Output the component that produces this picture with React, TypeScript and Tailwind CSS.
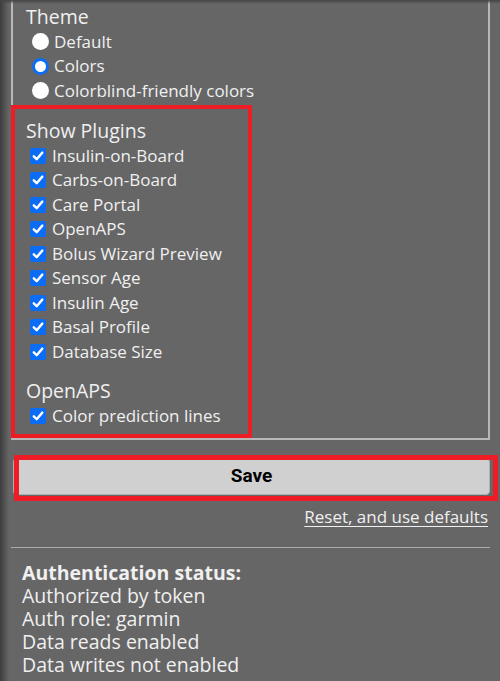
import React from "react";

const plugins = [
  "Insulin-on-Board",
  "Carbs-on-Board",
  "Care Portal",
  "OpenAPS",
  "Bolus Wizard Preview",
  "Sensor Age",
  "Insulin Age",
  "Basal Profile",
  "Database Size",
];

function Radio({ checked }: { checked?: boolean }) {
  return checked ? (
    <span className="inline-block w-[17px] h-[17px] rounded-full border-[3px] border-[#0b6cf5] bg-white shrink-0" />
  ) : (
    <span className="inline-block w-[17px] h-[17px] rounded-full bg-white shrink-0" />
  );
}

function Check() {
  return (
    <span className="inline-flex items-center justify-center w-[16px] h-[16px] rounded-[2px] bg-[#0b6cf5] shrink-0">
      <svg width="12" height="12" viewBox="0 0 12 12" fill="none">
        <path d="M1.8 6.3 L4.7 9.2 L10.3 2.6" stroke="white" strokeWidth="2.4" strokeLinecap="round" strokeLinejoin="round" />
      </svg>
    </span>
  );
}

export default function App() {
  return (
    <div className="relative w-[500px] h-[681px] overflow-hidden bg-[#666666] text-[#f0f0f0] font-['Open_Sans',sans-serif]">
      <div className="pl-[11px] pr-[10px]">
        <div className="border-x-2 border-b-2 border-[#b8b8b8] pl-[13px] pt-[5px] pb-[10px] text-[17px] leading-[24.5px]">
          <div className="text-[19.5px]">Theme</div>
          <div className="pl-[6px]">
            {["Default", "Colors", "Colorblind-friendly colors"].map((t, i) => (
              <div key={t} className="flex items-center gap-[5px]">
                <Radio checked={i === 1} />
                <span>{t}</span>
              </div>
            ))}
          </div>
          <div className="mt-[16px] text-[19.5px]">Show Plugins</div>
          <div className="pl-[4px]">
            {plugins.map((p) => (
              <div key={p} className="flex items-center gap-[6px]">
                <Check />
                <span>{p}</span>
              </div>
            ))}
          </div>
          <div className="mt-[15px] text-[19.5px]">OpenAPS</div>
          <div className="pl-[4px]">
            <div className="flex items-center gap-[6px]">
              <Check />
              <span>Color prediction lines</span>
            </div>
          </div>
        </div>

        <button className="mt-[18px] ml-[2px] w-[477px] h-[37px] rounded-[4px] bg-[#d0d0d0] border border-[#b0b0b0] text-black font-['Roboto',sans-serif] font-bold text-[19px]">
          Save
        </button>

        <div className="flex justify-end pr-[2px] mt-[10px] text-[17px] leading-[24px]">
          <span className="underline underline-offset-[3px]">Reset, and use defaults</span>
        </div>

        <div className="mt-[18px] h-px bg-[#aaaaaa] w-[479px]" />

        <div className="pl-[11px] pt-[13px] text-[19.5px] leading-[23px]">
          <div className="font-bold">Authentication status:</div>
          <div>Authorized by token</div>
          <div>Auth role: garmin</div>
          <div>Data reads enabled</div>
          <div>Data writes not enabled</div>
        </div>
      </div>

      <div className="absolute inset-y-0 left-0 w-[9px] bg-gradient-to-r from-[#3c3c3c] to-transparent" />
      <div className="absolute inset-x-0 top-0 h-[4px] bg-gradient-to-b from-[#444444] to-transparent" />

      <div className="absolute left-[11px] top-[105px] w-[241px] h-[333px] border-4 border-[#ee1c24]" />
      <div className="absolute left-[14px] top-[455px] w-[484px] h-[46px] border-[5px] border-[#ee1c24]" />
    </div>
  );
}
